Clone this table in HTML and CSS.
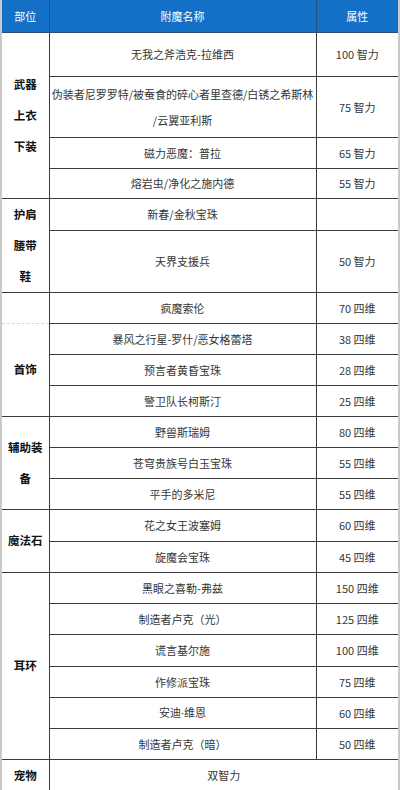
FILE: index.html
```html
<!DOCTYPE html>
<html lang="zh">
<head>
<meta charset="utf-8">
<title>附魔表</title>
<link rel="stylesheet" href="styles.css">
</head>
<body>
<div class="sheet">
<table class="enchant">
<colgroup><col class="c-part"><col class="c-name"><col class="c-attr"></colgroup>
<thead>
<tr class="h32"><th>部位</th><th>附魔名称</th><th>属性</th></tr>
</thead>
<tbody>
<tr class="r44"><td rowspan="4" class="part">武器<br>上衣<br>下装</td><td>无我之斧浩克-拉维西</td><td>100 智力</td></tr>
<tr class="r61"><td class="multi">伪装者尼罗罗特/被蚕食的碎心者里查德/白锈之希斯林<br>/云翼亚利斯</td><td>75 智力</td></tr>
<tr class="r31"><td>磁力恶魔：普拉</td><td>65 智力</td></tr>
<tr class="r30"><td>熔岩虫/净化之施内德</td><td>55 智力</td></tr>
<tr class="r32"><td rowspan="2" class="part">护肩<br>腰带<br>鞋</td><td>新春/金秋宝珠</td><td></td></tr>
<tr class="r60"><td>天界支援兵</td><td>50 智力</td></tr>
<tr class="r31"><td class="part blank"></td><td>疯魔索伦</td><td>70 四维</td></tr>
<tr class="r31"><td rowspan="3" class="part after-blank">首饰</td><td>暴风之行星-罗什/恶女格蕾塔</td><td>38 四维</td></tr>
<tr class="r31"><td>预言者黄昏宝珠</td><td>28 四维</td></tr>
<tr class="r31"><td>警卫队长柯斯汀</td><td>25 四维</td></tr>
<tr class="r31"><td rowspan="3" class="part">辅助装<br>备</td><td>野兽斯瑞姆</td><td>80 四维</td></tr>
<tr class="r31"><td>苍穹贵族号白玉宝珠</td><td>55 四维</td></tr>
<tr class="r31"><td>平手的多米尼</td><td>55 四维</td></tr>
<tr class="r32"><td rowspan="2" class="part">魔法石</td><td>花之女王波塞姆</td><td>60 四维</td></tr>
<tr class="r31"><td>旋魔会宝珠</td><td>45 四维</td></tr>
<tr class="r31"><td rowspan="6" class="part">耳环</td><td>黑眼之喜勒-弗兹</td><td>150 四维</td></tr>
<tr class="r31"><td>制造者卢克（光）</td><td>125 四维</td></tr>
<tr class="r32"><td>谎言基尔施</td><td>100 四维</td></tr>
<tr class="r31"><td>作修派宝珠</td><td>75 四维</td></tr>
<tr class="r31"><td>安迪<span class="dot">·</span>维恩</td><td>60 四维</td></tr>
<tr class="r31"><td>制造者卢克（暗）</td><td>50 四维</td></tr>
<tr class="r31"><td class="part">宠物</td><td colspan="2">双智力</td></tr>
</tbody>
</table>
</div>
</body>
</html>
```

FILE: styles.css
```css
html, body {
  margin: 0;
  padding: 0;
  background: #ffffff;
}

body {
  width: 400px;
  height: 790px;
  overflow: hidden;
  font-family: "Noto Sans CJK SC", "Noto Sans", sans-serif;
  font-size: 11px;
  color: #363636;
}

.sheet {
  width: 400px;
  box-sizing: border-box;
  border-left: 2px solid #c9c9c9;
  border-right: 2px solid #c9c9c9;
  border-bottom: 2px solid #c9c9c9;
}

.enchant {
  width: 100%;
  border-collapse: collapse;
  border-style: hidden;
  table-layout: fixed;
}

.c-part { width: 47px; }
.c-name { width: 267px; }
.c-attr { width: auto; }

.enchant th,
.enchant td {
  border: 1px solid #3c3c3c;
  padding: 0 4px;
  text-align: center;
  vertical-align: middle;
  line-height: 16px;
}

.enchant th {
  background: #1470c6;
  color: #ffffff;
  font-weight: normal;
  border-color: #2e4f73;
}

.enchant td.part {
  font-weight: bold;
  color: #111111;
  font-size: 11.5px;
  line-height: 31px;
  padding: 0;
}

.enchant td.multi {
  line-height: 26px;
  padding: 0 2px;
}

.enchant td.blank {
  border-bottom: 1px dashed #d6d6d6;
}

.enchant td.after-blank {
  border-top: 1px dashed #d6d6d6;
}

.dot {
  font-family: "Noto Sans", "DejaVu Sans", sans-serif;
}

.h32 { height: 32px; }
.r30 { height: 30px; }
.r31 { height: 31px; }
.r32 { height: 32px; }
.r44 { height: 44px; }
.r60 { height: 60px; }
.r61 { height: 61px; }
```
